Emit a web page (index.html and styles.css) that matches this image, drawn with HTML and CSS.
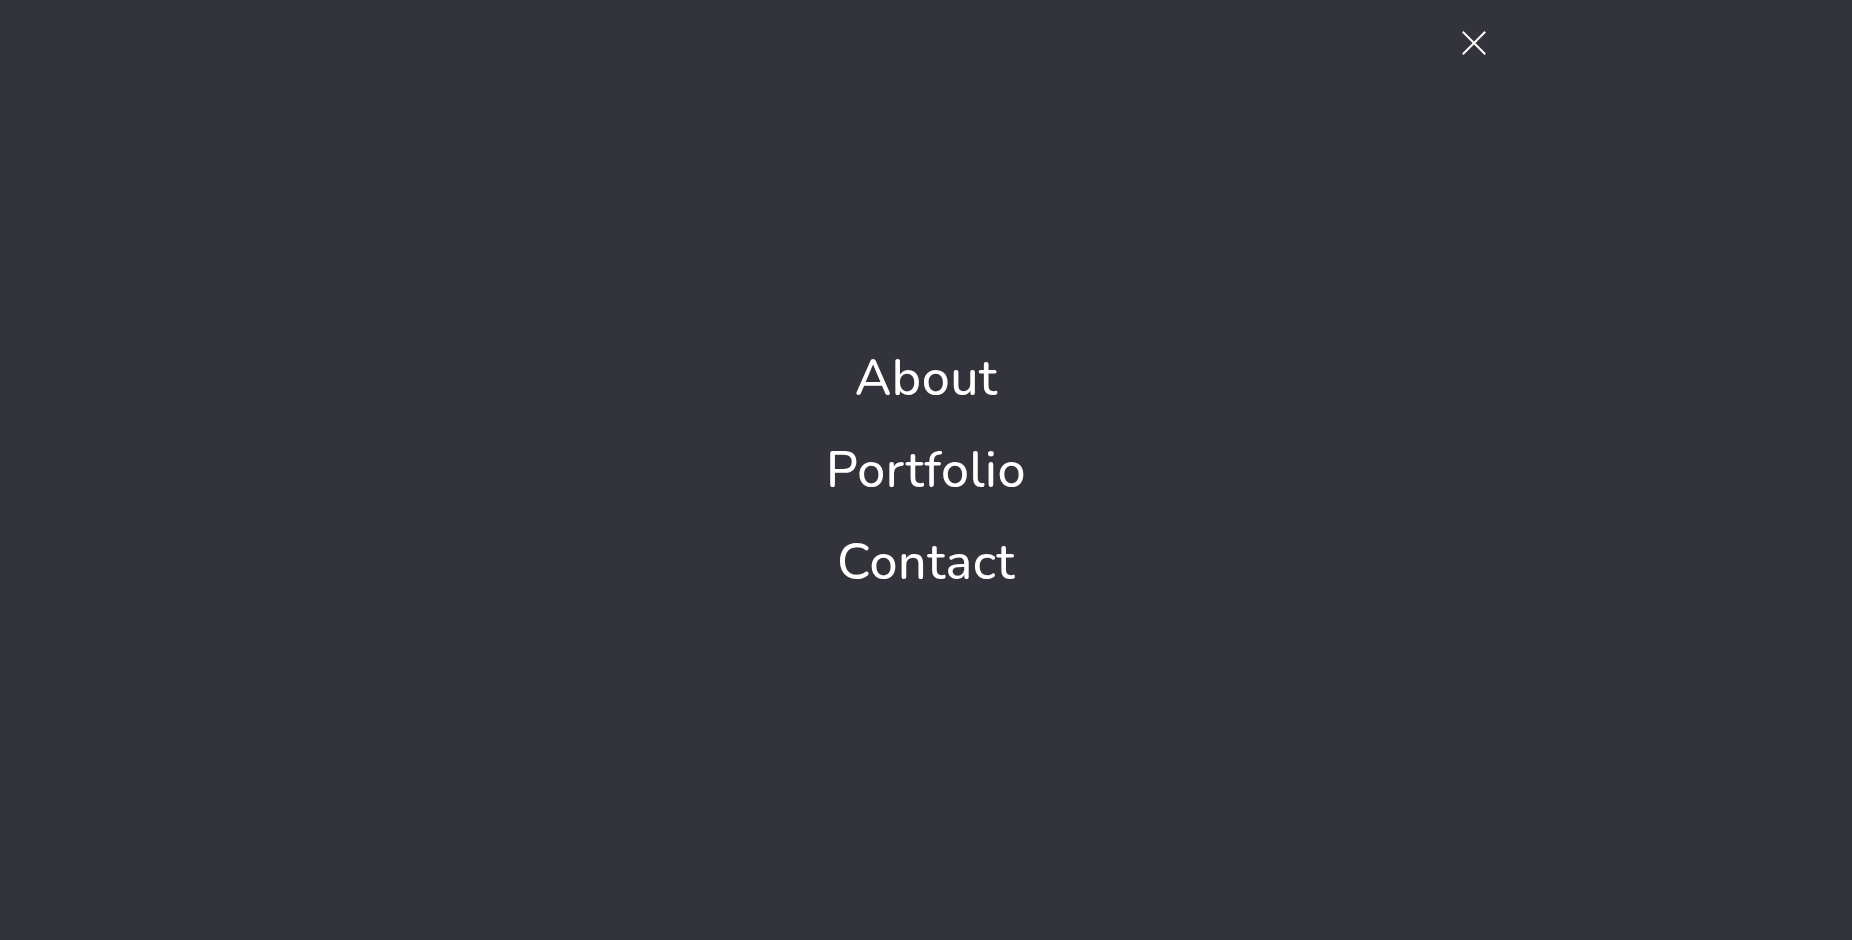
FILE: index.html
```html
<!DOCTYPE html>
<html lang="en">
<head>
<meta charset="utf-8">
<title>Menu</title>
<link rel="stylesheet" href="styles.css">
</head>
<body>
<div class="overlay">
  <header class="top">
    <div class="container">
      <button class="close" aria-label="Close menu">
        <svg width="24" height="24" viewBox="0 0 24 24" fill="none" stroke="#ffffff" stroke-width="2" stroke-linecap="square">
          <line x1="1.5" y1="1.5" x2="22.5" y2="22.5"/>
          <line x1="22.5" y1="1.5" x2="1.5" y2="22.5"/>
        </svg>
      </button>
    </div>
  </header>
  <nav class="menu">
    <a href="#about" class="menu-link">About</a>
    <a href="#portfolio" class="menu-link">Portfolio</a>
    <a href="#contact" class="menu-link">Contact</a>
  </nav>
</div>
</body>
</html>
```
FILE: styles.css
```css
html, body {
  margin: 0;
  padding: 0;
  height: 100%;
}
body {
  background: #33333c;
  font-family: "Nunito", "Open Sans", "Liberation Sans", sans-serif;
  color: #ffffff;
}
.overlay {
  height: 100vh;
  position: relative;
  display: flex;
  flex-direction: column;
}
.top {
  position: absolute;
  top: 0;
  left: 0;
  right: 0;
}
.container {
  width: 1140px;
  margin: 0 auto;
  display: flex;
  justify-content: flex-end;
  padding-top: 31px;
}
.close {
  background: none;
  border: 0;
  padding: 0;
  margin-right: 10px;
  width: 24px;
  height: 24px;
  cursor: pointer;
  display: block;
}
.close svg {
  display: block;
}
.menu {
  flex: 1;
  display: flex;
  flex-direction: column;
  align-items: center;
  justify-content: center;
  gap: 32px;
  padding-top: 2px;
}
.menu-link {
  color: #ffffff;
  text-decoration: none;
  font-size: 50px;
  font-weight: 500;
  line-height: 60px;
  letter-spacing: 0.5px;
}
```
